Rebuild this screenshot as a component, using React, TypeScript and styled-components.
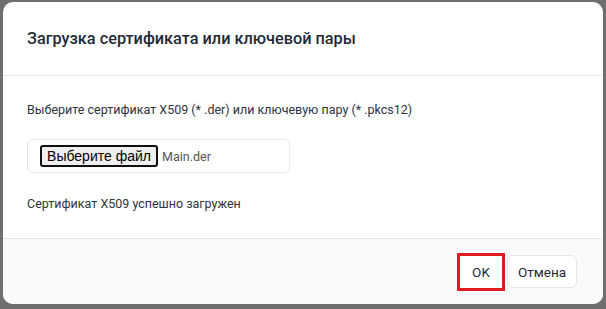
import styled, { createGlobalStyle } from 'styled-components';

const GlobalStyle = createGlobalStyle`
  html, body {
    margin: 0;
    padding: 0;
    background: #6f6f6f;
  }
  body {
    font-family: Roboto, "Noto Sans", sans-serif;
  }
`;

function App() {
  return (
    <>
      <GlobalStyle />
      <Backdrop>
        <Dialog>
          <Header>
            <Title>Загрузка сертификата или ключевой пары</Title>
          </Header>

          <Body>
            <Text>Выберите сертификат X509 (* .der) или ключевую пару (* .pkcs12)</Text>
            <FileBox>
              <ChooseButton type="button">Выберите файл</ChooseButton>
              <FileName>Main.der</FileName>
            </FileBox>
            <Text>Сертификат X509 успешно загружен</Text>
          </Body>

          <Footer>
            <Button highlighted>OK</Button>
            <Button>Отмена</Button>
          </Footer>
        </Dialog>
      </Backdrop>
    </>
  );
}

export default App;

const Backdrop = styled.div`
  width: 606px;
  height: 309px;
  padding: 2px 3px 5px 3px;
  box-sizing: border-box;
`;

const Dialog = styled.div`
  height: 100%;
  background: #fff;
  border-radius: 10px;
  overflow: hidden;
  display: flex;
  flex-direction: column;
`;

const Header = styled.div`
  height: 73px;
  padding: 0 24px;
  display: flex;
  align-items: center;
  border-bottom: 1px solid #e4e6ea;
`;

const Title = styled.h2`
  margin: 0;
  font-size: 16.3px;
  font-weight: 500;
  color: #1f2a37;
`;

const Body = styled.div`
  flex: 1;
  padding: 25px 24px 0 24px;
  display: flex;
  flex-direction: column;
  align-items: flex-start;
`;

const Text = styled.div`
  font-size: 12.5px;
  color: #2b3440;
  line-height: 18px;
`;

const FileBox = styled.div`
  width: 263px;
  height: 34px;
  margin: 20px 0 22px 0;
  padding: 0 12px;
  box-sizing: border-box;
  border: 1px solid #e6e8eb;
  border-radius: 6px;
  display: flex;
  align-items: center;
  gap: 4px;
`;

const ChooseButton = styled.button`
  height: 22px;
  width: 118px;
  padding: 0;
  font-family: "Liberation Sans", Arial, sans-serif;
  font-size: 14px;
  color: #000;
  background: #efefef;
  border: 2px solid #101010;
  border-radius: 3px;
`;

const FileName = styled.span`
  font-size: 12.5px;
  color: #555;
`;

const Footer = styled.div`
  height: 65px;
  padding: 0 26px 0 0;
  display: flex;
  align-items: center;
  justify-content: flex-end;
  gap: 2px;
  background: #f9fafb;
  border-top: 1px solid #e4e6ea;
`;

const Button = styled.button<{ highlighted?: boolean }>`
  height: ${({ highlighted }) => (highlighted ? '38px' : '33px')};
  width: ${({ highlighted }) => (highlighted ? '48px' : '70px')};
  padding: 0;
  box-sizing: border-box;
  font-family: Roboto, "Noto Sans", sans-serif;
  font-size: 13.5px;
  color: #1f2a37;
  background: #fff;
  border: ${({ highlighted }) => (highlighted ? '3px solid #e11b22' : '1px solid #e4e6ea')};
  border-radius: ${({ highlighted }) => (highlighted ? '0' : '6px')};
  cursor: pointer;
`;
